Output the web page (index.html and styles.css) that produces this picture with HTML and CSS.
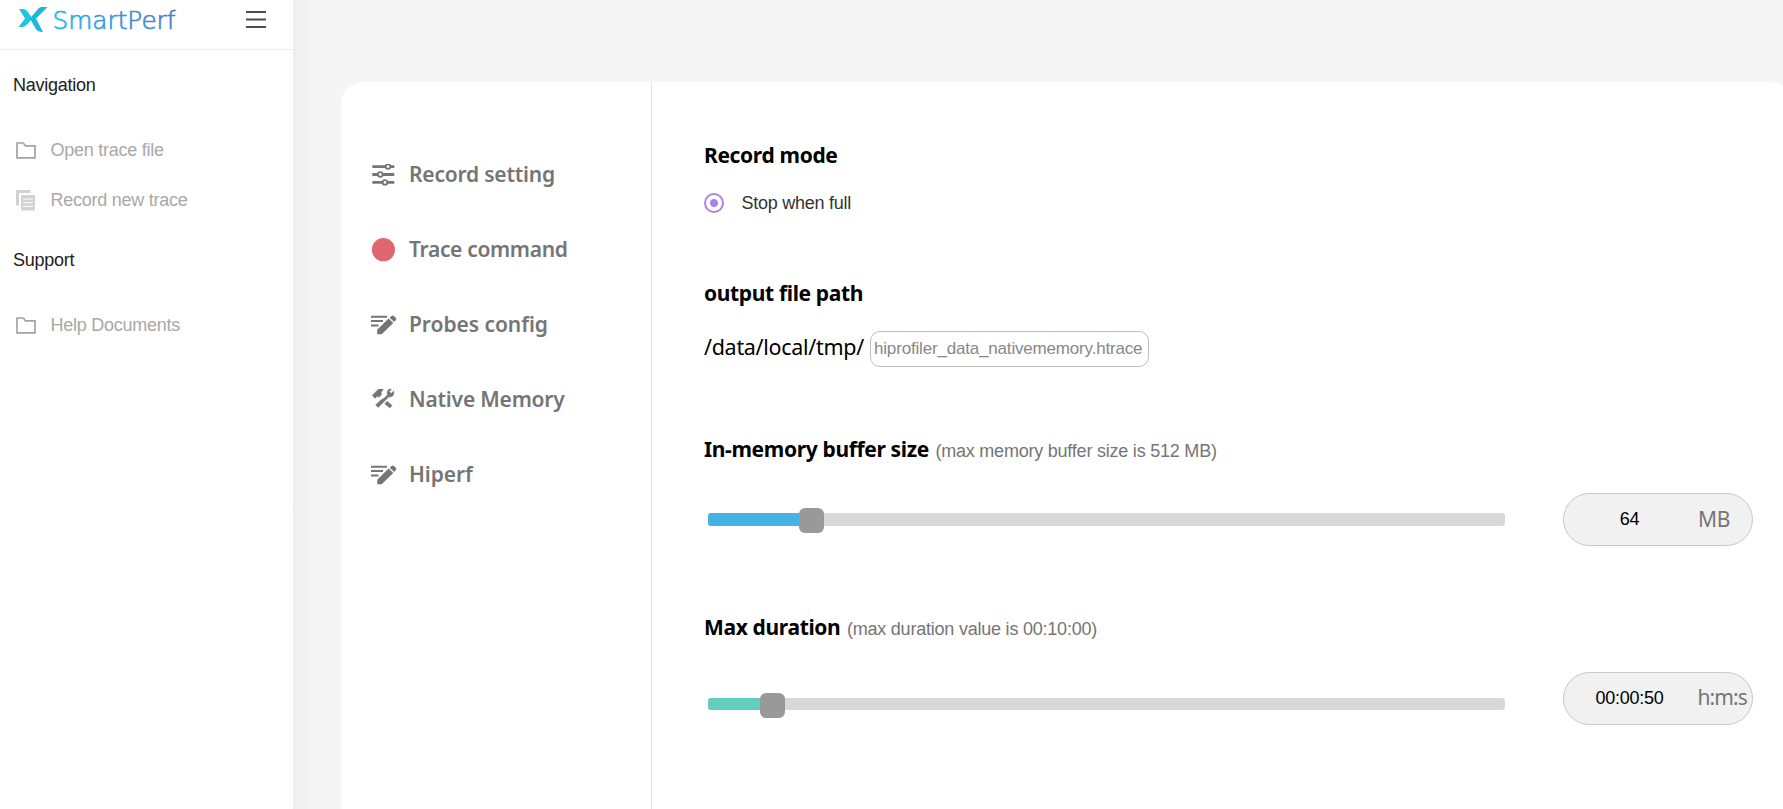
FILE: index.html
```html
<!DOCTYPE html>
<html lang="en">
<head>
<meta charset="utf-8">
<title>SmartPerf</title>
<link rel="stylesheet" href="styles.css">
</head>
<body>
<svg class="defs" aria-hidden="true">
  <symbol id="folder" viewBox="0 0 20 17"><path d="M1 1H7.3L9.5 3.8H19V15.8H1Z" fill="none" stroke="#a3a3a3" stroke-width="1.7"/></symbol>
  <symbol id="edit" viewBox="0 0 26 20"><path d="M0 1.7H16M0 6.1H12M0 10.5H7.5" stroke="#757575" stroke-width="2"/><path d="M6.2 14.8 17.6 3.500 22.300 8 10.700 19.300H6.200ZM18.700 2.700 20.500.900Q21.700-.1 22.900.900L24.800 2.700Q25.800 3.800 24.800 4.900L23.200 6.900Z" fill="#757575"/></symbol>
</svg>
<div class="app">
  <aside class="sidebar">
    <header class="brand">
      <svg class="logo" width="162" height="36" viewBox="0 0 162 36">
        <defs><linearGradient id="g" gradientUnits="userSpaceOnUse" x1="36" y1="0" x2="158" y2="0"><stop offset="0" stop-color="#20bce4"/><stop offset=".5" stop-color="#3b93d8"/><stop offset="1" stop-color="#4380ce"/></linearGradient></defs>
        <path d="M1 9H5.500Q8 9 9.500 11.500L14.500 18.500 9 24.500Q6.500 27 4 27H.500L7 18.500Z" fill="#20c4e5"/>
        <path d="M29.500 7H23.500Q21.500 7 20 9L12 18.500 17.500 28.500Q19.500 32 25 32L18 18.500Z" fill="#18b9df"/>
        <text class="logo-text" x="34.500" y="29" textLength="123" lengthAdjust="spacingAndGlyphs" fill="url(#g)" stroke="url(#g)" stroke-width=".7">SmartPerf</text>
      </svg>
      <svg class="menu" width="20" height="18" viewBox="0 0 20 18"><path d="M0 1H20M0 8.500H20M0 16H20" stroke="#4d4d4d" stroke-width="2"/></svg>
    </header>
    <h2 class="group">Navigation</h2>
    <a class="link"><svg width="20" height="17"><use href="#folder"/></svg><span>Open trace file</span></a>
    <a class="link"><svg width="20" height="21" viewBox="0 0 20 21"><path d="M0 0H14.500V3H3V15.500H0Z" fill="#d2d2d2"/><path d="M5 5H19V20.500H5Z" fill="#d2d2d2"/><path d="M7 9H17M7 12.700H17M7 16.400H17" stroke="#fff" stroke-width="1"/></svg><span>Record new trace</span></a>
    <h2 class="group support">Support</h2>
    <a class="link"><svg width="20" height="17"><use href="#folder"/></svg><span>Help Documents</span></a>
  </aside>
  <main class="main">
    <div class="card">
      <nav class="tabs">
        <a class="tab"><svg width="26" height="22" viewBox="0 .6 26 22"><g stroke="#757575"><path d="M1.300 3.200H23.300M1.300 11.100H23.300M1.300 19H23.300" stroke-width="2.900"/><g fill="#fff" stroke-width="1.800"><circle cx="17" cy="3.200" r="2.300"/><circle cx="9.300" cy="11.100" r="2.300"/><circle cx="14" cy="19" r="2.300"/></g></g></svg><span>Record setting</span></a>
        <a class="tab tight"><svg width="26" height="24" viewBox="0 0 26 24"><circle cx="12.400" cy="11.700" r="11.600" fill="#df6870"/></svg><span>Trace command</span></a>
        <a class="tab loose"><svg width="26" height="20"><use href="#edit"/></svg><span>Probes config</span></a>
        <a class="tab"><svg width="26" height="22" viewBox="0 0 26 22"><g fill="#757575" stroke="#757575" stroke-width=".5" transform="translate(-.6 -1)"><path d="M2 7.200 7.200 2Q9.400.3 13 1.200L10.500 4.800 11.500 6.200 8.400 9.300 7 8.300 4.300 10.300Z"/><path d="M13.700 10.300 17 7Q15.800 3 18.600 1.300 20.100.5 21.500.8L18.900 3.600 20.800 5.500 23.400 2.900Q24.100 6.400 22 8.200 20.300 9.400 18.500 8.800L7.800 19.400 5.200 16.900 10.500 12Z"/><path d="M16.800 13.300 21.700 17.600 19.300 20 14.400 15.700Z"/></g></svg><span>Native Memory</span></a>
        <a class="tab loose"><svg width="26" height="20"><use href="#edit"/></svg><span>Hiperf</span></a>
      </nav>
      <section class="settings">
        <h3 class="title"><span>Record mode</span></h3>
        <label class="radio"><i class="dot"></i><span>Stop when full</span></label>
        <h3 class="title path-title"><span>output file path</span></h3>
        <div class="path"><span class="prefix">/data/local/tmp/</span><div class="file">hiprofiler_data_nativememory.htrace</div></div>
        <h3 class="title buffer-title"><span>In-memory buffer size</span><small>(max memory buffer size is 512 MB)</small></h3>
        <div class="control">
          <div class="track"><i class="fill blue"></i><i class="thumb"></i></div>
          <div class="value"><span class="number">64</span><span class="unit">MB</span></div>
        </div>
        <h3 class="title duration-title"><span>Max duration</span><small>(max duration value is 00:10:00)</small></h3>
        <div class="control time">
          <div class="track"><i class="fill green"></i><i class="thumb"></i></div>
          <div class="value"><span class="number">00:00:50</span><span class="unit">h:m:s</span></div>
        </div>
      </section>
    </div>
  </main>
</div>
</body>
</html>
```
FILE: styles.css
```css
* { box-sizing: border-box; }
body { margin: 0; overflow: hidden; font-family: "Liberation Sans", Arial, sans-serif; background: #f5f5f5; }
.defs { position: absolute; width: 0; height: 0; }
.app { display: flex; width: 1783px; height: 809px; }
.sidebar { width: 293px; flex: none; background: #fff; }
.brand { height: 50px; border-bottom: 1px solid #ececec; display: flex; justify-content: space-between; padding: 0 27px 0 18px; }
.logo { display: block; }
.logo-text { font-family: "DejaVu Sans", sans-serif; font-weight: 200; font-size: 25px; }
.menu { margin-top: 11px; }
.group { margin: 0; padding-left: 13px; height: 75px; padding-top: 23px; font-size: 18px; line-height: 24px; font-weight: 400; color: #212121; letter-spacing: -.25px; }
.link { display: flex; align-items: center; height: 50px; padding-left: 16px; color: #a8a8a8; font-size: 18px; }
.link svg { margin-left: -.5px; }
.link span { margin-left: 15px; letter-spacing: -.25px; }
.support { height: 75px; }
.main { flex: 1; min-width: 0; padding: 82px 0 0 48px; background: linear-gradient(90deg, #eee 0, #f1f1f1 12px, #f5f5f5 26px); }
.card { width: 1452px; height: 727px; flex: none; border-radius: 22px 22px 0 0; background: #fff; display: flex; }
.tabs { width: 311px; flex: none; padding-top: 55px; border-right: 1px solid #e4e4e4; }
.tab { display: flex; align-items: center; height: 75px; padding-left: 30px; font: 600 21px "Noto Sans", sans-serif; color: #757575; letter-spacing: -.2px; }
.tab span { margin-left: 12px; padding-bottom: 1px; }
.tab.tight { letter-spacing: -.33px; }
.tab.loose { letter-spacing: -.05px; }
.settings { padding: 56px 0 0 52px; flex: 1; }
.title { margin: 0; height: 34px; display: flex; align-items: baseline; font: 700 21px/34px "Noto Sans", sans-serif; color: #000; letter-spacing: -.35px; }
.title small { font: 400 18px "Liberation Sans", sans-serif; color: #757575; margin-left: 6.5px; letter-spacing: -.22px; }
.radio { display: flex; align-items: center; height: 24px; margin-top: 19px; font-size: 18px; color: #333; letter-spacing: -.25px; }
.dot { width: 20px; height: 20px; border: 2px solid #a983e8; border-radius: 50%; background: radial-gradient(circle, #a983e8 3.500px, #fff 4.500px); margin-right: 17.5px; }
.path-title { margin-top: 61px; }
.path { display: flex; margin-top: 21px; height: 36px; }
.prefix { width: 166px; font: 400 21.5px/31px "Noto Sans", sans-serif; white-space: nowrap; letter-spacing: -.3px; }
.file { width: 279px; border: 1px solid #bebebe; border-radius: 10px; color: #888; font-size: 17px; line-height: 34px; padding-left: 3px; white-space: nowrap; letter-spacing: -.18px; }
.buffer-title { margin-top: 65px; }
.control { display: flex; align-items: center; height: 53px; margin-top: 27px; padding-left: 4px; }
.track { position: relative; width: 797px; height: 13px; border-radius: 3px; background: #d8d8d8; }
.fill { display: block; width: 100px; height: 100%; border-radius: 3px 0 0 3px; }
.blue { background: #46b1e3; }
.green { background: #61cfbe; }
.thumb { position: absolute; left: 91px; top: -5px; width: 25px; height: 25px; border-radius: 6px; background: #999; }
.value { width: 190px; height: 53px; margin-left: 58px; border: 1px solid #c8c8c8; border-radius: 27px; background: #f1f1f1; display: flex; align-items: center; }
.number { width: 131px; text-align: center; font-size: 18px; letter-spacing: -.25px; color: #000; padding-bottom: 1px; }
.unit { margin-left: 3px; font: 400 21px "Noto Sans", sans-serif; color: #757575; padding-bottom: 2px; letter-spacing: -.4px; }
.duration-title { margin-top: 64px; }
.time { margin-top: 28px; }
.time .track { height: 12px; top: 5px; }
.time .fill { width: 60px; }
.time .thumb { left: 52px; }
.time .unit { letter-spacing: -.9px; margin-left: 2.5px; padding-bottom: 4px; }
```
